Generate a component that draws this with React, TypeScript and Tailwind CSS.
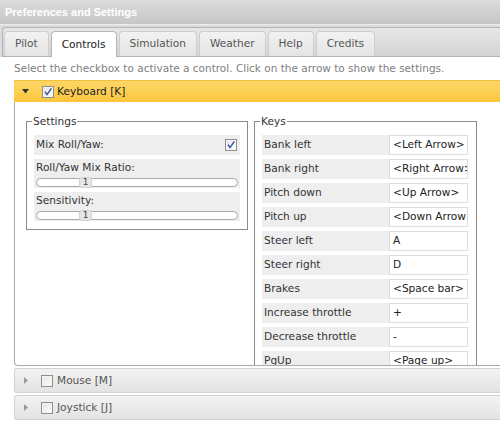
import React from "react";

const font = { fontFamily: '"DejaVu Sans", Verdana, sans-serif' };

function Check({ checked }: { checked: boolean }) {
  return (
    <svg width="12" height="12" viewBox="0 0 12 12" className="shrink-0">
      <defs>
        <linearGradient id={checked ? "cbg1" : "cbg0"} x1="0" y1="0" x2="1" y2="1">
          <stop offset="0" stopColor="#e2e2e2" />
          <stop offset="1" stopColor="#ffffff" />
        </linearGradient>
      </defs>
      <rect x="0.5" y="0.5" width="11" height="11" fill={`url(#${checked ? "cbg1" : "cbg0"})`} stroke="#8e8f8f" />
      <rect x="1.5" y="1.5" width="9" height="9" fill="none" stroke="#f4f4f4" />
      {checked && (
        <path d="M3 5.6 L5 8.6 L9.4 2.4" fill="none" stroke="#2f4f9a" strokeWidth="1.4" />
      )}
    </svg>
  );
}

function Slider() {
  return (
    <div className="relative mx-[2px] mt-[4px] h-[9px] rounded-full border border-[#a9a9a9] bg-white">
      <div className="absolute left-[42px] top-[-2px] flex h-[11px] w-[13px] items-center justify-center rounded-[3px] border border-[#d3d3d3] bg-[#e6e6e6] text-[9px] leading-none text-[#444]">
        1
      </div>
    </div>
  );
}

const keys: [string, string][] = [
  ["Bank left", "<Left Arrow>"],
  ["Bank right", "<Right Arrow>"],
  ["Pitch down", "<Up Arrow>"],
  ["Pitch up", "<Down Arrow>"],
  ["Steer left", "A"],
  ["Steer right", "D"],
  ["Brakes", "<Space bar>"],
  ["Increase throttle", "+"],
  ["Decrease throttle", "-"],
  ["PgUp", "<Page up>"],
  ["PgDn", "<Page down>"],
];

const tabs = ["Pilot", "Controls", "Simulation", "Weather", "Help", "Credits"];

export default function App() {
  return (
    <div className="h-[421px] w-[500px] overflow-hidden bg-white text-[10.6px] text-[#333]" style={font}>
      <div
        className="flex h-[24px] items-center bg-gradient-to-b from-[#dcdcdc] to-[#c6c6c6] px-[5px] text-[11px] font-bold text-white"
        style={{ fontFamily: '"Liberation Sans", Arial, sans-serif' }}
      >
        Preferences and Settings
      </div>
      <div className="h-[1px] bg-[#ececec]" />
      <div className="bg-[#dcdcdc] pl-[2px] pt-[2px]">
        <div className="flex h-[30px] items-end gap-[2px] rounded-tl-[4px] border-l border-t border-b border-[#b4b4b4] bg-gradient-to-b from-[#e6e6e6] to-[#d4d4d4] px-[1px]">
          {tabs.map((t) => {
            const active = t === "Controls";
            return (
              <div
                key={t}
                className={
                  active
                    ? "mb-[-1px] flex h-[26px] items-center rounded-t-[4px] border border-b-0 border-[#b4b4b4] bg-white px-[10px] text-[#222]"
                    : "flex h-[25px] items-center rounded-t-[4px] border border-b-0 border-[#cfcfcf] bg-gradient-to-b from-[#f2f2f2] to-[#e4e4e4] px-[10px] text-[#555]"
                }
              >
                {t}
              </div>
            );
          })}
        </div>
      </div>
      <div className="flex h-[23px] items-center pl-[14px] text-[10.5px] text-[#808080]">
        Select the checkbox to activate a control. Click on the arrow to show the settings.
      </div>
      <div className="ml-[14px]">
        <div className="flex h-[22px] items-center border-t border-[#f1c040] bg-gradient-to-b from-[#fdd565] via-[#fcd055] to-[#fcc43a] text-[#222]">
          <svg width="7" height="5" viewBox="0 0 7 5" className="ml-[8px] mr-[13px]">
            <path d="M0 0 L7 0 L3.5 4.5 Z" fill="#333" />
          </svg>
          <Check checked />
          <span className="ml-[3px]">Keyboard [K]</span>
        </div>
        <div className="h-[264px] overflow-hidden rounded-bl-[4px] border-b border-l border-[#aaaaaa] pl-[11px] pt-[12px]">
          <div className="flex items-start gap-[6px]">
            <fieldset className="w-[222px] border border-[#8c8c8c] px-[7px] pb-[8px] pt-[7px]">
              <legend className="ml-[-2px] px-[1px] leading-[14px] text-[#333]">Settings</legend>
              <div className="flex flex-col gap-[4px]">
                <div className="flex h-[20px] items-center justify-between bg-[#eeeeee] pl-[2px] pr-[3px]">
                  <span>Mix Roll/Yaw:</span>
                  <Check checked />
                </div>
                <div className="h-[29px] bg-[#eeeeee] pt-[2px]">
                  <div className="pl-[2px] leading-[13px]">Roll/Yaw Mix Ratio:</div>
                  <Slider />
                </div>
                <div className="h-[29px] bg-[#eeeeee] pt-[2px]">
                  <div className="pl-[2px] leading-[13px]">Sensitivity:</div>
                  <Slider />
                </div>
              </div>
            </fieldset>
            <fieldset className="w-[223px] border border-[#8c8c8c] pl-[7px] pr-[8px] pt-[7px] pb-[8px]">
              <legend className="ml-[-2px] px-[1px] leading-[14px] text-[#333]">Keys</legend>
              <div className="flex flex-col gap-[4px]">
                {keys.map(([k, v]) => (
                  <div key={k} className="flex h-[20px]">
                    <div className="flex flex-1 items-center bg-[#eeeeee] pl-[2px]">{k}</div>
                    <div className="flex w-[79px] items-center overflow-hidden whitespace-nowrap border border-[#dcdcdc] bg-white pl-[3px] text-[#222]">
                      {v}
                    </div>
                  </div>
                ))}
              </div>
            </fieldset>
          </div>
        </div>
        {["Mouse [M]", "Joystick [J]"].map((n) => (
          <div
            key={n}
            className="mt-[2px] flex h-[25px] items-center rounded-l-[3px] border border-r-0 border-[#d2d2d2] bg-gradient-to-b from-[#f3f3f3] to-[#e3e3e3] text-[#555]"
          >
            <svg width="4" height="7" viewBox="0 0 4 7" className="ml-[9px] mr-[13px]">
              <path d="M0 0 L4 3.5 L0 7 Z" fill="#999" />
            </svg>
            <Check checked={false} />
            <span className="ml-[4px]">{n}</span>
          </div>
        ))}
      </div>
    </div>
  );
}
